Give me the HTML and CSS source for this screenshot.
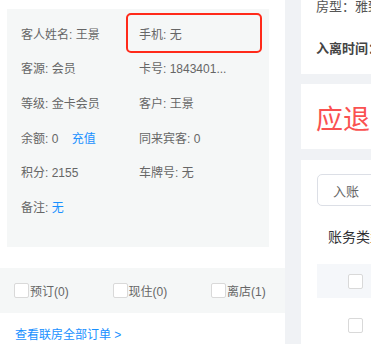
FILE: index.html
```html
<!DOCTYPE html>
<html lang="zh-CN">
<head>
  <meta charset="UTF-8">
  <meta name="viewport" content="width=device-width, initial-scale=1.0">
  <title>客人信息</title>
  <link rel="stylesheet" href="styles.css">
</head>
<body>
  <div class="page">
    <div class="guest-panel">
      <div class="guest-info">
        <div class="info-cell"><span>客人姓名: 王景</span></div>
        <div class="info-cell highlight"><span>手机: 无</span></div>
        <div class="info-cell"><span>客源: 会员</span></div>
        <div class="info-cell"><span>卡号: 1843401...</span></div>
        <div class="info-cell"><span>等级: 金卡会员</span></div>
        <div class="info-cell"><span>客户: 王景</span></div>
        <div class="info-cell"><span>余额: 0 <a class="blue-link recharge">充值</a></span></div>
        <div class="info-cell"><span>同来宾客: 0</span></div>
        <div class="info-cell"><span>积分: 2155</span></div>
        <div class="info-cell"><span>车牌号: 无</span></div>
        <div class="info-cell"><span>备注: <a class="blue-link">无</a></span></div>
      </div>

      <div class="status-bar">
        <label class="status-item"><span class="check"></span>预订(0)</label>
        <label class="status-item"><span class="check"></span>现住(0)</label>
        <label class="status-item"><span class="check"></span>离店(1)</label>
      </div>

      <a class="blue-link all-orders">查看联房全部订单 &gt;</a>
    </div>

    <div class="gutter"></div>

    <div class="side-panel">
      <div class="card room-card">
        <div class="room-line">房型：雅致大床房</div>
        <div class="room-line strong">入离时间：2023-05-01</div>
      </div>
      <div class="card refund-card">
        <div class="refund">应退 ¥0.00</div>
      </div>
      <div class="card bill-card">
        <button class="btn">入账</button>
        <div class="bill-title">账务类型</div>
        <div class="bill-row head"><span class="check"></span></div>
        <div class="bill-row"><span class="check"></span></div>
      </div>
    </div>
  </div>
</body>
</html>
```

FILE: styles.css
```css
body {
  margin: 0;
  font-family: 'Liberation Sans', 'Noto Sans CJK SC', sans-serif;
  color: #666;
  background-color: #fff;
}

.page {
  display: flex;
  width: 371px;
  height: 344px;
  overflow: hidden;
}

.guest-panel {
  width: 285px;
  flex-shrink: 0;
  padding-top: 9px;
  box-sizing: border-box;
}

.guest-info {
  margin-left: 7px;
  width: 262px;
  height: 238px;
  padding: 7px 0 0 14px;
  box-sizing: border-box;
  background-color: #f5f7f7;
  display: grid;
  grid-template-columns: 118px 1fr;
  grid-auto-rows: 34.6px;
  font-size: 12px;
}

.info-cell {
  display: flex;
  align-items: center;
  white-space: nowrap;
}

.highlight {
  position: relative;
}

.highlight::after {
  content: '';
  position: absolute;
  left: -13px;
  top: -3px;
  width: 136px;
  height: 40px;
  border: 2px solid #ff2a1a;
  border-radius: 5px;
  box-sizing: border-box;
}

.blue-link {
  color: #1890ff;
  cursor: pointer;
  text-decoration: none;
}

.recharge {
  margin-left: 10px;
}

.status-bar {
  display: flex;
  margin-top: 21px;
  height: 45px;
  padding-left: 14px;
  background-color: #f5f7f7;
  font-size: 12px;
  overflow: hidden;
}

.status-item {
  display: flex;
  align-items: center;
  flex-shrink: 0;
  width: 98.5px;
}

.check {
  display: inline-block;
  width: 15px;
  height: 15px;
  border: 1px solid #d9d9d9;
  border-radius: 2px;
  background-color: #fff;
  box-sizing: border-box;
  margin-right: 1px;
}

.all-orders {
  display: block;
  margin: 12px 0 0 15px;
  font-size: 12px;
}

.gutter {
  width: 16px;
  flex-shrink: 0;
  background-color: #f0f2f5;
}

.side-panel {
  flex: 1;
  min-width: 0;
  background-color: #f0f2f5;
  display: flex;
  flex-direction: column;
  gap: 8px;
  white-space: nowrap;
  overflow: hidden;
}

.card {
  background-color: #fff;
  padding-left: 15px;
}

.room-card {
  height: 80px;
  margin-top: -6px;
  flex-shrink: 0;
  font-size: 13px;
}

.room-line {
  color: #555;
  line-height: 26px;
}

.room-line.strong {
  margin-top: 16px;
  color: #444;
  font-weight: bold;
}

.refund-card {
  height: 65px;
  flex-shrink: 0;
  display: flex;
  align-items: center;
  margin-top: 2px;
}

.refund {
  color: #fa5151;
  font-size: 27px;
  margin-top: 1px;
}

.bill-card {
  flex: 1;
  margin-top: 3px;
  padding-top: 14px;
  padding-left: 16px;
}

.btn {
  display: block;
  width: 80px;
  height: 32px;
  padding: 0 0 0 15px;
  text-align: left;
  border: 1px solid #dcdfe6;
  border-radius: 5px;
  background-color: #fff;
  color: #666;
  font-family: inherit;
  font-size: 13px;
}

.bill-title {
  margin: 22px 0 0 11px;
  font-size: 14px;
  color: #303133;
  line-height: 18px;
}

.bill-row {
  height: 54px;
  padding-left: 31px;
  display: flex;
  align-items: center;
}

.bill-row.head {
  margin-top: 18px;
  height: 34px;
  background-color: #f5f7fa;
}
```
